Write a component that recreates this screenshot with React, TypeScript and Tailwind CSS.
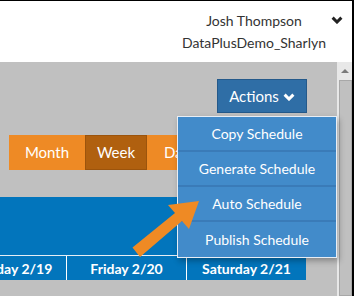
// calendar columns visible at the bottom of the screen
const dayColumns = ['Thursday 2/19', 'Friday 2/20', 'Saturday 2/21'];
const menuItems = ['Copy Schedule', 'Generate Schedule', 'Auto Schedule', 'Publish Schedule'];

function Chevron({ className }: { className?: string }) {
  return (
    <svg className={className} width="12" height="8" viewBox="0 0 12 8" fill="none">
      <path d="M1.6 1.6 L6 6 L10.4 1.6" stroke="currentColor" strokeWidth="3" />
    </svg>
  );
}

export default function App() {
  return (
    <div className="relative w-[354px] h-[296px] overflow-hidden bg-white border-t border-r-2 border-black flex flex-col font-['Lato',sans-serif]">
      {/* Header with user info */}
      <div className="h-[61px] shrink-0 flex justify-end pr-[9px]">
        <div className="flex flex-col items-center pt-[9px] text-[14px] leading-[22px] text-[#333]">
          <span>Josh Thompson</span>
          <span>DataPlusDemo_Sharlyn</span>
        </div>
        <Chevron className="ml-[5px] mt-[15px] text-[#222]" />
      </div>

      <div className="flex flex-1 bg-[#c0c0c0]">
        {/* Main content */}
        <div className="flex-1 flex flex-col">
          <div className="flex justify-end pr-[30px] pt-[17px]">
            <button className="w-[90px] h-[34px] bg-[#2f6ea6] border border-[#24598a] text-white text-[15px] flex items-center justify-center gap-[4px]">
              Actions <Chevron className="mt-[1px]" />
            </button>
          </div>

          <div className="flex mt-[22px] ml-[9px] h-[35px] text-white text-[15px]">
            <div className="w-[76px] bg-[#ee8a25] flex items-center justify-center">Month</div>
            <div className="w-[62px] bg-[#b0600f] border border-[#9c540c] flex items-center justify-center">Week</div>
            <div className="w-[60px] bg-[#ee8a25] flex items-center justify-center">Day</div>
          </div>

          <div className="mt-[27px] w-[306px] flex flex-col">
            <div className="h-[58px] bg-[#0275bc]"></div>
            <div className="h-px bg-[#e6eef5]"></div>
            <div className="flex justify-end overflow-hidden h-[24px] bg-[#0275bc]">
              {dayColumns.map((day) => (
                <div key={day} className="shrink-0 w-[120px] border-l border-white flex items-center justify-center text-white font-bold text-[14px]">
                  {day}
                </div>
              ))}
            </div>
            <div className="flex justify-end overflow-hidden flex-1 h-[20px] bg-white">
              {dayColumns.map((day) => (
                <div key={day} className="shrink-0 w-[120px] border-l border-[#dddddd]"></div>
              ))}
            </div>
          </div>
        </div>

        {/* Scrollbar */}
        <div className="w-[15px] bg-[#e8e8e8] flex flex-col items-center">
          <div className="h-[18px] flex items-center justify-center">
            <div className="w-0 h-0 border-l-[4px] border-r-[4px] border-b-[4px] border-l-transparent border-r-transparent border-b-[#7a7a7a]"></div>
          </div>
          <div className="w-[13px] flex-1 ml-[2px] bg-[#c0c0c0] border border-[#a8a8a8]"></div>
        </div>
      </div>

      {/* Actions dropdown menu */}
      <div className="absolute left-[177px] top-[115px] w-[160px] border border-[#e8eef5] shadow-[2px_3px_6px_rgba(0,0,0,0.3)] bg-[#428bca] flex flex-col text-white text-[14px]">
        {menuItems.map((item, i) => (
          <div key={item} className={'h-[35px] flex items-center justify-center ' + (i < menuItems.length - 1 ? 'border-b-2 border-[#3a7bb8]' : '')}>
            {item}
          </div>
        ))}
      </div>

      {/* Pointer arrow */}
      <svg className="absolute left-0 top-0" width="354" height="296">
        <polygon points="132.5,246.5 175,212 168,204 199,200 189,228 182,220 140,256" fill="#ef8a24" />
      </svg>
    </div>
  );
}
